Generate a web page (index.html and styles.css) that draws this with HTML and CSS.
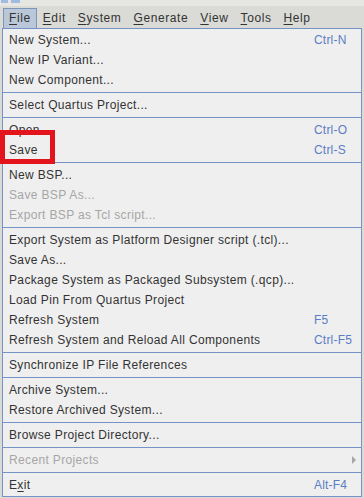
FILE: index.html
```html
<!DOCTYPE html>
<html lang="en">
<head>
    <meta charset="UTF-8">
    <title>Platform Designer - File menu</title>
    <link rel="stylesheet" href="styles.css">
</head>
<body>
    <div class="title-strip">
        <span class="tab-bit"></span>
        <span class="tab-bit wide"></span>
    </div>

    <div class="menubar">
        <div class="menu open"><u>F</u>ile</div>
        <div class="menu"><u>E</u>dit</div>
        <div class="menu"><u>S</u>ystem</div>
        <div class="menu"><u>G</u>enerate</div>
        <div class="menu"><u>V</u>iew</div>
        <div class="menu"><u>T</u>ools</div>
        <div class="menu"><u>H</u>elp</div>
    </div>

    <div class="popup">
        <div class="item"><span class="label">New System...</span><span class="key">Ctrl-N</span></div>
        <div class="item"><span class="label">New IP Variant...</span><span class="key"></span></div>
        <div class="item"><span class="label">New Component...</span><span class="key"></span></div>
        <div class="sep"></div>
        <div class="item"><span class="label">Select Quartus Project...</span><span class="key"></span></div>
        <div class="sep"></div>
        <div class="item"><span class="label">Open</span><span class="key">Ctrl-O</span></div>
        <div class="item"><span class="label">Save</span><span class="key">Ctrl-S</span></div>
        <div class="sep"></div>
        <div class="item"><span class="label">New BSP...</span><span class="key"></span></div>
        <div class="item disabled"><span class="label">Save BSP As...</span><span class="key"></span></div>
        <div class="item disabled"><span class="label">Export BSP as Tcl script...</span><span class="key"></span></div>
        <div class="sep"></div>
        <div class="item"><span class="label">Export System as Platform Designer script (.tcl)...</span><span class="key"></span></div>
        <div class="item"><span class="label">Save As...</span><span class="key"></span></div>
        <div class="item"><span class="label">Package System as Packaged Subsystem (.qcp)...</span><span class="key"></span></div>
        <div class="item"><span class="label">Load Pin From Quartus Project</span><span class="key"></span></div>
        <div class="item"><span class="label">Refresh System</span><span class="key">F5</span></div>
        <div class="item"><span class="label">Refresh System and Reload All Components</span><span class="key">Ctrl-F5</span></div>
        <div class="sep"></div>
        <div class="item"><span class="label">Synchronize IP File References</span><span class="key"></span></div>
        <div class="sep"></div>
        <div class="item"><span class="label">Archive System...</span><span class="key"></span></div>
        <div class="item"><span class="label">Restore Archived System...</span><span class="key"></span></div>
        <div class="sep"></div>
        <div class="item"><span class="label">Browse Project Directory...</span><span class="key"></span></div>
        <div class="sep"></div>
        <div class="item disabled"><span class="label">Recent Projects</span><span class="key arrow"><span class="tri"></span></span></div>
        <div class="sep"></div>
        <div class="item"><span class="label">E<u>x</u>it</span><span class="key">Alt-F4</span></div>
    </div>

    <div class="highlight"></div>
</body>
</html>
```

FILE: styles.css
```css
body {
    margin: 0;
    width: 364px;
    height: 498px;
    overflow: hidden;
    background: #dadad6;
    font-family: "Liberation Sans", Arial, sans-serif;
    font-size: 12px;
    letter-spacing: 0.35px;
    color: #333333;
    position: relative;
}

u {
    text-decoration-thickness: 1px;
    text-underline-offset: 2px;
}

.title-strip {
    height: 6px;
    background: #e6e6e3;
    display: flex;
    gap: 3px;
    padding-left: 1px;
}

.tab-bit {
    width: 7px;
    height: 3px;
    background: #9fbbe0;
}

.tab-bit.wide {
    width: 9px;
}

.menubar {
    height: 22px;
    display: flex;
    align-items: flex-end;
    padding-left: 3px;
    letter-spacing: 0.6px;
}

.menu {
    height: 19px;
    line-height: 19px;
    padding: 0 5px;
    border: 1px solid transparent;
    border-bottom: none;
}

.menu.open {
    background: #b9c7d8;
    border-color: #7d95b6;
}

.popup {
    margin-left: 2px;
    width: 358px;
    border: 1px solid #7693c8;
    background: #efefef;
    padding: 1px 0;
}

.item {
    height: 20px;
    line-height: 20px;
    display: flex;
    padding-left: 6px;
}

.label {
    flex: 1;
}

.key {
    width: 47px;
    color: #5a7ec3;
    letter-spacing: 0.2px;
}

.disabled .label {
    color: #a6a6a6;
}

.arrow {
    display: flex;
    justify-content: flex-end;
    align-items: center;
    padding-right: 5px;
    box-sizing: border-box;
}

.tri {
    width: 0;
    height: 0;
    border-top: 4px solid transparent;
    border-bottom: 4px solid transparent;
    border-left: 4px solid #a6a6a6;
}

.sep {
    height: 5px;
    display: flex;
    flex-direction: column;
    justify-content: center;
}

.sep::before {
    content: "";
    height: 1px;
    background: #7693c8;
}

.highlight {
    position: absolute;
    left: 0;
    top: 130px;
    width: 45px;
    height: 24px;
    border: 5px solid #e3141c;
}
```
